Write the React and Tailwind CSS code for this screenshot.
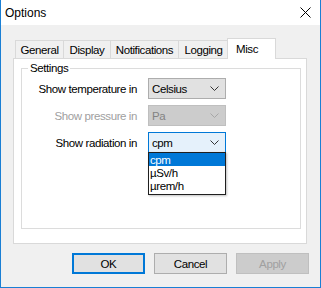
import React from "react";

const Chevron = ({ color = "#333" }) => (
  <svg width="9" height="5" viewBox="0 0 9 5" className="shrink-0">
    <path d="M0.5 0.5 L4.5 4.5 L8.5 0.5" fill="none" stroke={color} strokeWidth="1" />
  </svg>
);

const Select = ({ value, disabled, focused }) => {
  let cls = "border-[#adadad] bg-[#e1e1e1] text-black";
  if (disabled) cls = "border-[#bfbfbf] bg-[#cccccc] text-[#838383]";
  if (focused) cls = "border-[#0078d7] bg-[#e5f1fb] text-black";
  return (
    <div className={`w-[78px] h-[21px] border flex items-center justify-between pl-[3px] pr-[6px] ${cls}`}>
      <span>{value}</span>
      <Chevron color={disabled ? "#a6a6a6" : "#333"} />
    </div>
  );
};

const Row = ({ label, children, disabled }) => (
  <div className="flex items-center">
    <div className={`w-[116px] text-right pr-[1px] ${disabled ? "text-[#a0a0a0]" : "text-black"}`}>{label}</div>
    <div className="ml-[10px] relative">{children}</div>
  </div>
);

const tabs = [
  { name: "General", w: "w-[49px]" },
  { name: "Display", w: "w-[48px]" },
  { name: "Notifications", w: "w-[69px]" },
  { name: "Logging", w: "w-[51px]" },
];

export default function App() {
  return (
    <div
      className="w-[321px] h-[288px] flex flex-col border-x border-b border-[#1a7fd4] text-[11.5px] tracking-[-0.4px] leading-[14px] overflow-hidden"
      style={{ fontFamily: '"Liberation Sans", Arial, sans-serif' }}
    >
      {/* title bar */}
      <div className="h-[25px] bg-white flex items-center justify-between pl-[4px] pr-[9px]">
        <span className="text-[12px] tracking-normal text-black">Options</span>
        <svg width="11" height="11" viewBox="0 0 11 11">
          <path d="M0.5 0.5 L10.5 10.5 M10.5 0.5 L0.5 10.5" stroke="#000" strokeWidth="1" />
        </svg>
      </div>

      <div className="flex-1 bg-[#f0f0f0] flex flex-col pl-[12px] pr-[13px]">
        {/* tabs */}
        <div className="mt-[13px] h-[20px] flex items-end pl-[2px] relative z-10">
          {tabs.map((t) => (
            <div
              key={t.name}
              className={`h-[18px] ${t.w} border border-b-0 border-[#d9d9d9] bg-[#f0f0f0] -ml-[1px] first:ml-0 flex items-center justify-center`}
            >
              {t.name}
            </div>
          ))}
          <div className="h-[21px] -mb-[1px] -ml-[2px] w-[49px] pl-[8px] border border-b-0 border-[#d9d9d9] bg-white flex items-start pt-[3px]">
            Misc
          </div>
        </div>

        {/* page */}
        <div className="h-[186px] border border-[#d9d9d9] bg-white pl-[7px] pr-[5px] pt-[2px]">
          <fieldset className="border border-[#dcdcdc] h-[168px] px-0 pt-[3px]">
            <legend className="ml-[6px] px-[2px] leading-[14px]">Settings</legend>
            <div className="flex flex-col gap-[6px]">
              <Row label="Show temperature in">
                <Select value="Celsius" />
              </Row>
              <Row label="Show pressure in" disabled>
                <Select value="Pa" disabled />
              </Row>
              <Row label="Show radiation in">
                <Select value="cpm" focused />
                <div className="absolute left-0 top-[20px] w-[78px] border border-[#1f1f1f] bg-white pb-[2px] shadow-[1px_1px_2px_rgba(0,0,0,0.25)]">
                  <div className="h-[13px] bg-[#0078d7] text-white pl-[1px] flex items-center">cpm</div>
                  <div className="h-[13px] pl-[1px] flex items-center">µSv/h</div>
                  <div className="h-[13px] pl-[1px] flex items-center">µrem/h</div>
                </div>
              </Row>
            </div>
          </fieldset>
        </div>

        {/* buttons */}
        <div className="mt-[9px] flex justify-end gap-[9px] -mr-[2px]">
          <button className="w-[73px] h-[21px] border-2 border-[#0078d7] bg-[#e1e1e1] text-black">OK</button>
          <button className="w-[73px] h-[21px] border border-[#adadad] bg-[#e1e1e1] text-black">Cancel</button>
          <button className="w-[73px] h-[21px] border border-[#bfbfbf] bg-[#cccccc] text-[#a0a0a0]">Apply</button>
        </div>
      </div>
    </div>
  );
}
